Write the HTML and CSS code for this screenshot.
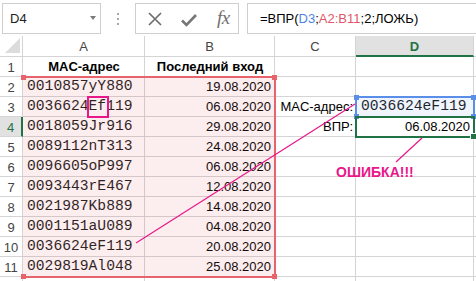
FILE: index.html
```html
<!DOCTYPE html>
<html lang="ru">
<head>
  <meta charset="UTF-8" />
  <title>ВПР - MAC-адрес</title>
  <link rel="stylesheet" href="styles.css">
</head>
<body>
  <div class="formula-bar">
    <div class="name-box"><span>D4</span><span class="arrow"></span></div>
    <div class="grip"><i></i><i></i><i></i></div>
    <div class="fx-buttons">
      <svg class="icon-x" width="14" height="14" viewBox="0 0 14 14">
        <path d="M1 1 L13 13 M13 1 L1 13" stroke="#6e6e6e" stroke-width="1.7" fill="none"/>
      </svg>
      <svg class="icon-ok" width="16" height="14" viewBox="0 0 16 14">
        <path d="M1 7.5 L5.5 12 L15 2" stroke="#777" stroke-width="2.6" fill="none"/>
      </svg>
      <span class="fx">fx</span>
    </div>
    <div class="formula">=ВПР(<span class="ref-blue">D3</span>;<span class="ref-red">A2:B11</span>;2;ЛОЖЬ)</div>
  </div>

  <div class="sheet">
    <div class="grid">
      <div class="h corner"></div><div class="h">A</div><div class="h">B</div><div class="h">C</div><div class="h active-col">D</div><div class="h"></div>

      <div class="h">1</div><div class="c head">MAC-адрес</div><div class="c head">Последний вход</div><div class="c"></div><div class="c"></div><div class="c"></div>
      <div class="h">2</div><div class="c mono">0010857yY880</div><div class="c num">19.08.2020</div><div class="c"></div><div class="c"></div><div class="c"></div>
      <div class="h">3</div><div class="c mono">0036624Ef119</div><div class="c num">06.08.2020</div><div class="c label">MAC-адрес:</div><div class="c mono lookup">0036624eF119</div><div class="c"></div>
      <div class="h active-row">4</div><div class="c mono">0018059Jr916</div><div class="c num">29.08.2020</div><div class="c label">ВПР:</div><div class="c num">06.08.2020</div><div class="c"></div>
      <div class="h">5</div><div class="c mono">0089112nT313</div><div class="c num">24.08.2020</div><div class="c"></div><div class="c"></div><div class="c"></div>
      <div class="h">6</div><div class="c mono">0096605oP997</div><div class="c num">06.08.2020</div><div class="c"></div><div class="c"></div><div class="c"></div>
      <div class="h">7</div><div class="c mono">0093443rE467</div><div class="c num">12.08.2020</div><div class="c"></div><div class="c"></div><div class="c"></div>
      <div class="h">8</div><div class="c mono">0021987Kb889</div><div class="c num">14.08.2020</div><div class="c"></div><div class="c"></div><div class="c"></div>
      <div class="h">9</div><div class="c mono">0001151aU089</div><div class="c num">04.08.2020</div><div class="c"></div><div class="c"></div><div class="c"></div>
      <div class="h">10</div><div class="c mono">0036624eF119</div><div class="c num">20.08.2020</div><div class="c"></div><div class="c"></div><div class="c"></div>
      <div class="h">11</div><div class="c mono">0029819Al048</div><div class="c num">25.08.2020</div><div class="c"></div><div class="c"></div><div class="c"></div>
      <div class="h edge"></div><div class="c edge"></div><div class="c edge"></div><div class="c edge"></div><div class="c edge"></div><div class="c edge"></div>
    </div>

    <!-- reference highlights -->
    <div class="range-red">
      <i class="tl"></i><i class="tr"></i><i class="bl"></i><i class="br"></i>
    </div>
    <div class="range-blue">
      <i class="tl"></i><i class="tr"></i><i class="bl"></i><i class="br"></i>
    </div>
    <div class="active-cell"><i></i></div>

    <svg class="marks" width="476" height="245" viewBox="0 0 476 245">
      <rect x="88" y="61" width="20" height="20" fill="none" stroke="#e8178a" stroke-width="2"/>
      <line x1="355" y1="68" x2="136" y2="207" stroke="#e8178a" stroke-width="1.2"/>
      <line x1="422" y1="102" x2="396" y2="126" stroke="#e8178a" stroke-width="1.2"/>
    </svg>
    <div class="error">ОШИБКА!!!</div>
  </div>
</body>
</html>
```

FILE: styles.css
```css
body {
  margin: 0;
  width: 476px;
  height: 281px;
  overflow: hidden;
  background: #fff;
  font-family: "Liberation Sans", Arial, sans-serif;
  font-size: 13px;
  color: #000;
}

/* formula bar */
.formula-bar {
  display: flex;
  height: 36px;
  padding: 3px 0 2px 2px;
  box-sizing: border-box;
}
.name-box {
  width: 99px;
  border: 1px solid #cfcfcf;
  box-sizing: border-box;
  display: flex;
  align-items: center;
  justify-content: space-between;
  padding: 0 3px 1px 7px;
  color: #222;
}
.arrow {
  width: 0;
  height: 0;
  border-left: 3.5px solid transparent;
  border-right: 3.5px solid transparent;
  border-top: 4px solid #7a7a7a;
  margin-right: 1px;
}
.grip {
  width: 34px;
  display: flex;
  flex-direction: column;
  align-items: center;
  justify-content: center;
  gap: 3px;
}
.grip i {
  width: 2px;
  height: 2px;
  background: #a8a8a8;
}
.fx-buttons {
  width: 104px;
  border: 1px solid #cfcfcf;
  box-sizing: border-box;
  display: flex;
  align-items: center;
  gap: 19px;
  padding-left: 12px;
}
.icon-ok {
  margin-top: 2px;
}
.fx {
  font-family: "Liberation Serif", serif;
  font-style: italic;
  font-size: 19px;
  color: #6e6e6e;
  margin-left: 1px;
  margin-bottom: 2px;
  letter-spacing: -0.5px;
}
.formula {
  flex: 1;
  margin-left: 8px;
  margin-right: -6px;
  border: 1px solid #cfcfcf;
  box-sizing: border-box;
  padding: 0 0 1px 12px;
  display: flex;
  align-items: center;
  white-space: pre;
}
.ref-blue {
  color: #4f84e0;
}
.ref-red {
  color: #e05867;
}

/* sheet */
.sheet {
  position: relative;
  height: 245px;
  overflow: hidden;
}
.grid {
  display: grid;
  grid-template-columns: 23px 122px 130px 81px 118px 1fr;
  grid-template-rows: 21px repeat(11, 20px) 4px;
}
.h, .c {
  box-sizing: border-box;
  border-right: 1px solid #d4d4d4;
  border-bottom: 1px solid #d4d4d4;
  white-space: nowrap;
}
.h {
  display: flex;
  align-items: center;
  justify-content: center;
  color: #444;
  padding-top: 1px;
}
.edge {
  border-bottom: none;
}
.corner {
  position: relative;
}
.corner::after {
  content: "";
  position: absolute;
  left: 5px;
  top: 2px;
  width: 15px;
  height: 15px;
  background: #dcdcdc;
  clip-path: polygon(100% 0, 100% 100%, 0 100%);
}
.active-col {
  background: #e1e1e1;
  color: #217346;
  font-weight: bold;
  border-bottom: 2px solid #217346;
}
.active-row {
  background: #e1e1e1;
  color: #217346;
  border-right: 2px solid #217346;
}
.c {
  display: flex;
  align-items: flex-end;
  padding: 0 3px 1px 4px;
  line-height: 17px;
}
.head {
  justify-content: center;
  font-weight: bold;
}
.mono {
  font-family: "Liberation Mono", "Courier New", monospace;
  font-size: 14.67px;
  color: #1a1a1a;
}
.num {
  justify-content: flex-end;
}
.label {
  justify-content: flex-end;
  padding-right: 2px;
  overflow: visible;
}
.lookup {
  padding-left: 5px;
}

/* highlights over the grid */
.range-red {
  position: absolute;
  left: 23px;
  top: 40px;
  width: 253px;
  height: 202px;
  box-sizing: border-box;
  border: 2px solid #e8646c;
  border-left: none;
  background: rgba(232, 100, 108, 0.11);
}
.range-blue {
  position: absolute;
  left: 355px;
  top: 60px;
  width: 120px;
  height: 22px;
  box-sizing: border-box;
  border: 2px solid #5b8ee6;
  background: rgba(91, 142, 230, 0.09);
}
.range-red i, .range-blue i {
  position: absolute;
  width: 5px;
  height: 5px;
}
.range-red i {
  background: #e8646c;
}
.range-blue i {
  background: #5b8ee6;
}
.range-red .tl { left: -2px; top: -3px; }
.range-red .tr { right: -3px; top: -3px; }
.range-red .bl { left: -2px; bottom: -3px; }
.range-red .br { right: -3px; bottom: -3px; }
.range-blue .tl { left: -3px; top: -3px; }
.range-blue .tr { right: -3px; top: -3px; }
.range-blue .bl { left: -3px; bottom: -3px; }
.range-blue .br { right: -3px; bottom: -3px; }

.active-cell {
  position: absolute;
  left: 355px;
  top: 80px;
  width: 120px;
  height: 22px;
  box-sizing: border-box;
  border: 2px solid #217346;
}
.active-cell i {
  position: absolute;
  right: -4px;
  bottom: -4px;
  width: 5px;
  height: 5px;
  background: #217346;
  border: 1px solid #fff;
}

.marks {
  position: absolute;
  left: 0;
  top: 0;
}
.error {
  position: absolute;
  left: 336px;
  top: 128px;
  color: #e8178a;
  font-weight: bold;
  font-size: 14px;
}
```
